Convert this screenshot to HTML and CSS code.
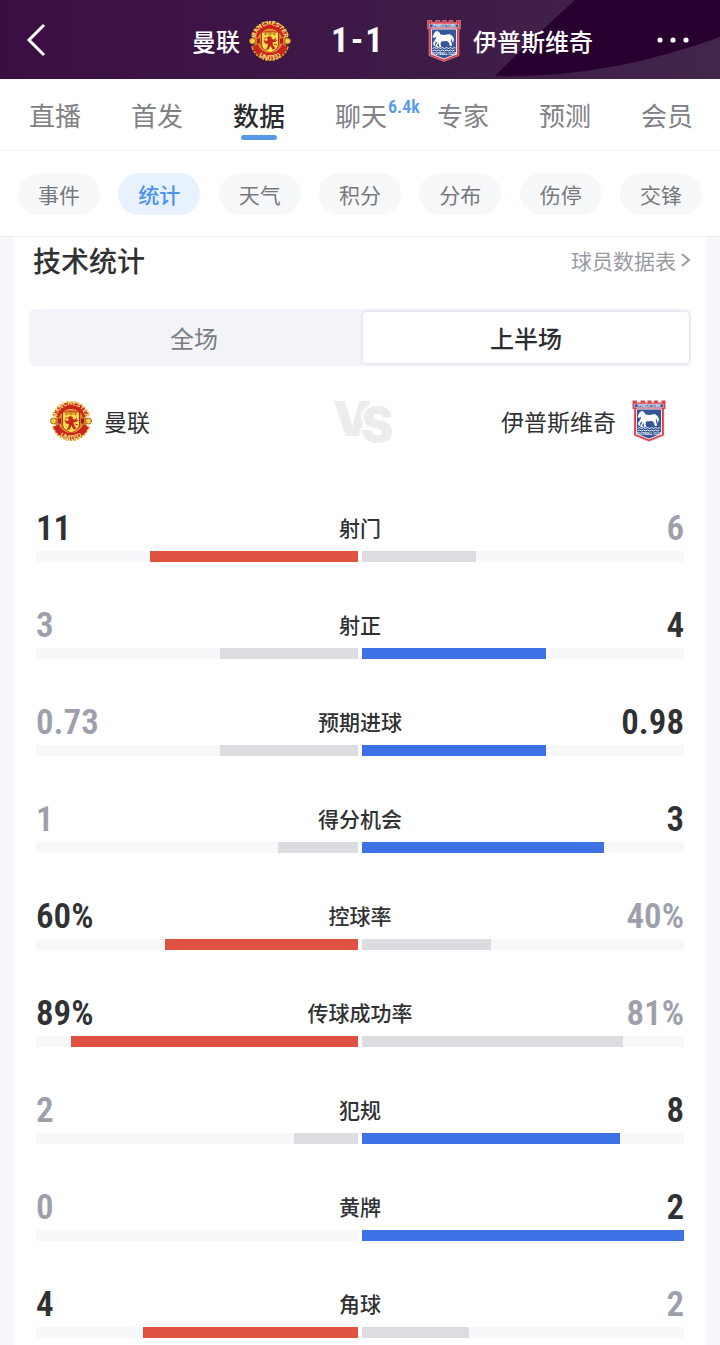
FILE: index.html
```html
<!DOCTYPE html>
<html lang="zh-CN">
<head>
    <meta charset="UTF-8" />
    <meta name="viewport" content="width=device-width, initial-scale=1" />
    <title>曼联 1-1 伊普斯维奇</title>
    <link rel="stylesheet" href="styles.css">
</head>
<body>
    <!-- Shared crests -->
    <svg class="sprite" aria-hidden="true">
        <symbol id="crest-united" viewBox="0 0 84 84">
            <path d="M8 29A36 36 0 0 1 76 29L66 34A26 26 0 0 0 18 34zM8 55A36 36 0 0 0 76 55L66 50A26 26 0 0 1 18 50z" fill="none" stroke="#d9a52c" stroke-width="6" stroke-dasharray="5 2" />
            <circle cx="42" cy="42" r="32" fill="#d8782a" />
            <path d="M7 30A37 37 0 0 1 77 30L65 36A24 24 0 0 0 19 36zM7 54A37 37 0 0 0 77 54L65 48A24 24 0 0 1 19 48z" fill="#c9251c" />
            <path d="M19 36A24 24 0 0 1 65 36M19 48A24 24 0 0 0 65 48" fill="none" stroke="#e9b73a" stroke-width="2" />
            <path d="M19 37v10M65 37v10" stroke="#a8201a" stroke-width="6" />
            <circle cx="7" cy="42" r="6" fill="#f3cf4a" stroke="#a86b1b" stroke-width="2" />
            <circle cx="77" cy="42" r="6" fill="#f3cf4a" stroke="#a86b1b" stroke-width="2" />
            <path d="M25 24h34v24c0 9-7 14-17 18-10-4-17-9-17-18z" fill="#fbe04a" stroke="#c9251c" stroke-width="2" />
            <path d="M30 28h24M33 25v6M42 24v7M51 25v6" stroke="#b77a1c" stroke-width="2" />
            <path d="M40 32l6 2-1 4 5 1 4-4-1 8-6 2 1 5 5 7-6 2-4-8-4 8-6 1 4-6 1-6-6-1-3-7 6 2 3-2-3-4z" fill="#c9251c" />
            <path d="M52 44l4-4M50 48l6 2M34 34l-4 5" stroke="#c9251c" stroke-width="2" />
            <path id="united-top" d="M14 38a28 28 0 0 1 56 0" fill="none" />
            <path id="united-bottom" d="M7 45a35 35 0 0 0 70 0" fill="none" />
            <text class="crest-text" font-size="12" fill="#ffe681" text-anchor="middle"><textPath href="#united-top" startOffset="50%">MANCHESTER</textPath></text>
            <text class="crest-text" font-size="13" fill="#ffe681" text-anchor="middle"><textPath href="#united-bottom" startOffset="50%">UNITED</textPath></text>
        </symbol>
        <symbol id="crest-ipswich" viewBox="0 0 68 84">
            <path d="M1 1h9v4h7V1h9v4h5V1h8v4h5V1h8v4h7V1h8v17h-3v53L34 83 4 71V18H1z" fill="#d9434c" stroke="#f0a4a4" />
            <path d="M5 8h58v7H5z" fill="#3c5a9d" stroke="#f4dfe6" />
            <path d="M9 18h50v50L34 78 9 68z" fill="#35569b" stroke="#f0e4ec" stroke-width="2" />
            <path d="M14 27l3-4 4-1 4 3 2 4 8 1 10-2 6 4 3 6-2 8-2-4-1-5-2 5 3 8-4 2-3-8-4-2-11 1-1 6 2 5-4 1-2-9-4-3-4 5 2 4-4-1-1-5 5-7 1-6-4 3-3-2z" fill="#fff" />
            <path d="M23 43l-5 9 4 2M46 39l2 13" fill="none" stroke="#fff" stroke-width="3" />
            <path d="M11 57l4-2 4 2 4-2 4 2 4-2 4 2 4-2 4 2 4-2 4 2 4-2 2 1M11 62l4-2 4 2 4-2 4 2 4-2 4 2 4-2 4 2 4-2 4 2 4-2" fill="none" stroke="#e8edf6" stroke-width="2" />
            <text class="crest-text" x="34" y="14" font-size="6" fill="#fff" text-anchor="middle">IPSWICH TOWN</text>
            <text class="crest-text" x="34" y="70" font-size="6" fill="#fff" text-anchor="middle">FOOTBALL CLUB</text>
        </symbol>
    </svg>

    <header class="topbar">
        <svg class="topbar-bg" viewBox="0 0 720 79" preserveAspectRatio="xMaxYMid slice" aria-hidden="true">
            <path d="M575 0Q538 33 495 76Q605 79 720 37V0z" fill="#28002f" />
        </svg>
        <button class="icon-btn" type="button" aria-label="返回">
            <svg width="36" height="40" viewBox="0 0 36 40"><path d="M20 4L5 19l15 15" fill="none" stroke="#fff" stroke-width="3" /></svg>
        </button>
        <div class="match">
            <div class="side side-home">
                <span>曼联</span>
                <svg class="crest-round"><use href="#crest-united" /></svg>
            </div>
            <div class="score"><span>1</span><span>-</span><span>1</span></div>
            <div class="side side-away">
                <svg class="crest-shield"><use href="#crest-ipswich" /></svg>
                <span>伊普斯维奇</span>
            </div>
        </div>
        <button class="icon-btn" type="button" aria-label="更多">
            <svg width="36" height="40" viewBox="0 0 36 40" fill="#fff"><circle cx="6" cy="19" r="2.6" /><circle cx="19" cy="19" r="2.6" /><circle cx="32" cy="19" r="2.6" /></svg>
        </button>
    </header>

    <nav class="tabs">
        <a href="#">直播</a>
        <a href="#">首发</a>
        <a href="#" class="active">数据</a>
        <a href="#">聊天<sup class="badge">6.4k</sup></a>
        <a href="#">专家</a>
        <a href="#">预测</a>
        <a href="#">会员</a>
    </nav>

    <nav class="pills">
        <a href="#">事件</a>
        <a href="#" class="active">统计</a>
        <a href="#">天气</a>
        <a href="#">积分</a>
        <a href="#">分布</a>
        <a href="#">伤停</a>
        <a href="#">交锋</a>
    </nav>

    <main class="card">
        <div class="card-head">
            <h1>技术统计</h1>
            <a href="#">球员数据表<svg width="10" height="16" viewBox="0 0 10 16"><path d="M1 2l7 6-7 6" fill="none" stroke="#999ba3" stroke-width="2" /></svg></a>
        </div>

        <div class="segment">
            <button type="button">全场</button>
            <button type="button" class="active">上半场</button>
        </div>

        <div class="teams">
            <div class="team">
                <svg class="crest-round"><use href="#crest-united" /></svg>
                <span>曼联</span>
            </div>
            <svg class="versus" viewBox="0 0 56 50">
                <text x="3" y="40">V<tspan class="versus-s" dx="-10" dy="6">S</tspan></text>
            </svg>
            <div class="team team-away">
                <span>伊普斯维奇</span>
                <svg class="crest-shield"><use href="#crest-ipswich" /></svg>
            </div>
        </div>

        <div class="stats">
            <div class="stat">
                <div class="stat-text"><b class="lead">11</b><span>射门</span><b>6</b></div>
                <div class="bars">
                    <div class="bar home lead"><i style="width: 64.7%"></i></div>
                    <div class="bar away"><i style="width: 35.3%"></i></div>
                </div>
            </div>
            <div class="stat">
                <div class="stat-text"><b>3</b><span>射正</span><b class="lead">4</b></div>
                <div class="bars">
                    <div class="bar home"><i style="width: 42.9%"></i></div>
                    <div class="bar away lead"><i style="width: 57.1%"></i></div>
                </div>
            </div>
            <div class="stat">
                <div class="stat-text"><b>0.73</b><span>预期进球</span><b class="lead">0.98</b></div>
                <div class="bars">
                    <div class="bar home"><i style="width: 42.9%"></i></div>
                    <div class="bar away lead"><i style="width: 57.1%"></i></div>
                </div>
            </div>
            <div class="stat">
                <div class="stat-text"><b>1</b><span>得分机会</span><b class="lead">3</b></div>
                <div class="bars">
                    <div class="bar home"><i style="width: 25%"></i></div>
                    <div class="bar away lead"><i style="width: 75%"></i></div>
                </div>
            </div>
            <div class="stat">
                <div class="stat-text"><b class="lead">60%</b><span>控球率</span><b>40%</b></div>
                <div class="bars">
                    <div class="bar home lead"><i style="width: 60%"></i></div>
                    <div class="bar away"><i style="width: 40%"></i></div>
                </div>
            </div>
            <div class="stat">
                <div class="stat-text"><b class="lead">89%</b><span>传球成功率</span><b>81%</b></div>
                <div class="bars">
                    <div class="bar home lead"><i style="width: 89%"></i></div>
                    <div class="bar away"><i style="width: 81%"></i></div>
                </div>
            </div>
            <div class="stat">
                <div class="stat-text"><b>2</b><span>犯规</span><b class="lead">8</b></div>
                <div class="bars">
                    <div class="bar home"><i style="width: 20%"></i></div>
                    <div class="bar away lead"><i style="width: 80%"></i></div>
                </div>
            </div>
            <div class="stat">
                <div class="stat-text"><b>0</b><span>黄牌</span><b class="lead">2</b></div>
                <div class="bars">
                    <div class="bar home"><i style="width: 0%"></i></div>
                    <div class="bar away lead"><i style="width: 100%"></i></div>
                </div>
            </div>
            <div class="stat">
                <div class="stat-text"><b class="lead">4</b><span>角球</span><b>2</b></div>
                <div class="bars">
                    <div class="bar home lead"><i style="width: 66.7%"></i></div>
                    <div class="bar away"><i style="width: 33.3%"></i></div>
                </div>
            </div>
        </div>
    </main>
</body>
</html>
```
FILE: styles.css
```css
* {
    box-sizing: border-box;
}
body {
    margin: 0;
    background: #f6f8fb;
    color: #303133;
    font-family: "Noto Sans CJK SC", sans-serif;
}
a {
    color: inherit;
    text-decoration: none;
}
button {
    padding: 0;
    border: 0;
    background: none;
    color: inherit;
    font-family: inherit;
    cursor: pointer;
}
.sprite {
    display: none;
}
.crest-text {
    font-family: "Liberation Sans", sans-serif;
    font-weight: bold;
}
.crest-round {
    width: 42px;
    height: 42px;
}
.crest-shield {
    width: 34px;
    height: 42px;
}

/* top bar */
.topbar {
    position: relative;
    display: flex;
    align-items: center;
    height: 79px;
    padding: 2px 30px 0 24px;
    background: linear-gradient(to right, #3b0e43, #3e1a47 55%, #43264c);
    color: #fff;
}
.topbar-bg {
    position: absolute;
    inset: 0;
    width: 100%;
    height: 100%;
}
.icon-btn {
    position: relative;
    height: 40px;
}
.match {
    position: relative;
    flex: 1;
    display: grid;
    grid-template-columns: 1fr auto 1fr;
    align-items: center;
    gap: 40px;
}
.side {
    display: flex;
    align-items: center;
    font-size: 24px;
    font-weight: 500;
    line-height: 36px;
    white-space: nowrap;
}
.side-home {
    justify-content: flex-end;
    gap: 9px;
}
.side-away {
    gap: 12px;
    padding-left: 4px;
}
.score {
    display: flex;
    gap: 2px;
    font-family: "Roboto Condensed", Roboto, sans-serif;
    font-size: 35px;
    font-weight: bold;
    line-height: 40px;
}

/* main tabs */
.tabs {
    display: flex;
    height: 72px;
    padding: 0 2px 0 4px;
    border-bottom: 1px solid #f0f1f3;
    background: #fff;
}
.tabs a {
    position: relative;
    flex: 1;
    color: #808185;
    font-size: 26px;
    line-height: 72px;
    text-align: center;
}
.tabs .active {
    color: #2b2c2e;
    font-weight: 500;
}
.tabs .active::after {
    content: "";
    position: absolute;
    left: 50%;
    bottom: 10px;
    width: 36px;
    height: 5px;
    margin-left: -18px;
    border-radius: 3px;
    background: #5899ee;
}
.badge {
    position: absolute;
    left: 78px;
    top: 18px;
    color: #5899ee;
    font-family: "Roboto Condensed", Roboto, sans-serif;
    font-size: 18px;
    font-weight: 600;
    line-height: 20px;
}

/* sub tabs */
.pills {
    display: flex;
    justify-content: space-between;
    align-items: center;
    height: 86px;
    padding: 0 18px;
    border-bottom: 1px solid #eeeff2;
    background: #fff;
}
.pills a {
    width: 82px;
    border-radius: 21px;
    background: #f7f8fa;
    color: #77787c;
    font-size: 21px;
    line-height: 42px;
    text-align: center;
}
.pills .active {
    background: #e8f2fe;
    color: #4c93ec;
    font-weight: 500;
}

/* stats card */
.card {
    margin: 0 14px;
    padding: 3px 15px 0;
    background: #fff;
}
.card-head {
    display: flex;
    justify-content: space-between;
    align-items: center;
    height: 40px;
    padding-left: 4px;
}
.card-head h1 {
    margin: 0;
    font-size: 28px;
    font-weight: 500;
    line-height: 40px;
}
.card-head a {
    display: flex;
    align-items: center;
    gap: 5px;
    color: #999ba3;
    font-size: 21px;
    line-height: 40px;
}
.segment {
    display: flex;
    gap: 6px;
    margin-top: 29px;
    padding: 3px 2px;
    border-radius: 6px;
    background: #f3f4f9;
}
.segment button {
    flex: 1;
    height: 51px;
    border-radius: 4px;
    color: #7c7d81;
    font-size: 24px;
}
.segment .active {
    background: #fff;
    box-shadow: 0 0 4px rgba(0, 0, 0, 0.12);
    color: #2b2c2e;
    font-weight: 500;
}
.teams {
    display: grid;
    grid-template-columns: 1fr auto 1fr;
    align-items: center;
    margin-top: 30px;
    padding: 0 25px 0 21px;
}
.team {
    display: flex;
    align-items: center;
    gap: 12px;
    font-size: 23px;
    line-height: 50px;
}
.team-away {
    justify-content: flex-end;
    gap: 16px;
}
.versus {
    width: 56px;
    height: 50px;
    overflow: visible;
    fill: #ececee;
    font-family: Inter, sans-serif;
    font-size: 48px;
    font-weight: 900;
}
.versus-s {
    stroke: #fff;
    stroke-width: 4px;
    paint-order: stroke;
}

.stats {
    padding: 60px 7px 0;
}
.stat {
    height: 97px;
}
.stat-text {
    display: grid;
    grid-template-columns: 1fr auto 1fr;
    height: 44px;
    font-size: 21px;
    font-weight: 500;
    line-height: 42px;
}
.stat-text b {
    color: #9da0ab;
    font-family: "Roboto Condensed", Roboto, sans-serif;
    font-size: 35px;
    font-weight: 600;
    line-height: 46px;
}
.stat-text b:last-child {
    text-align: right;
}
.stat-text .lead {
    color: #303133;
}
.bars {
    display: flex;
    gap: 4px;
    margin-top: 1px;
}
.bar {
    flex: 1;
    display: flex;
    height: 11px;
    background: #f7f8fa;
}
.bar.home {
    justify-content: flex-end;
}
.bar i {
    background: #dcdde1;
}
.bar.home.lead i {
    background: #df5141;
}
.bar.away.lead i {
    background: #3e70e6;
}
```
